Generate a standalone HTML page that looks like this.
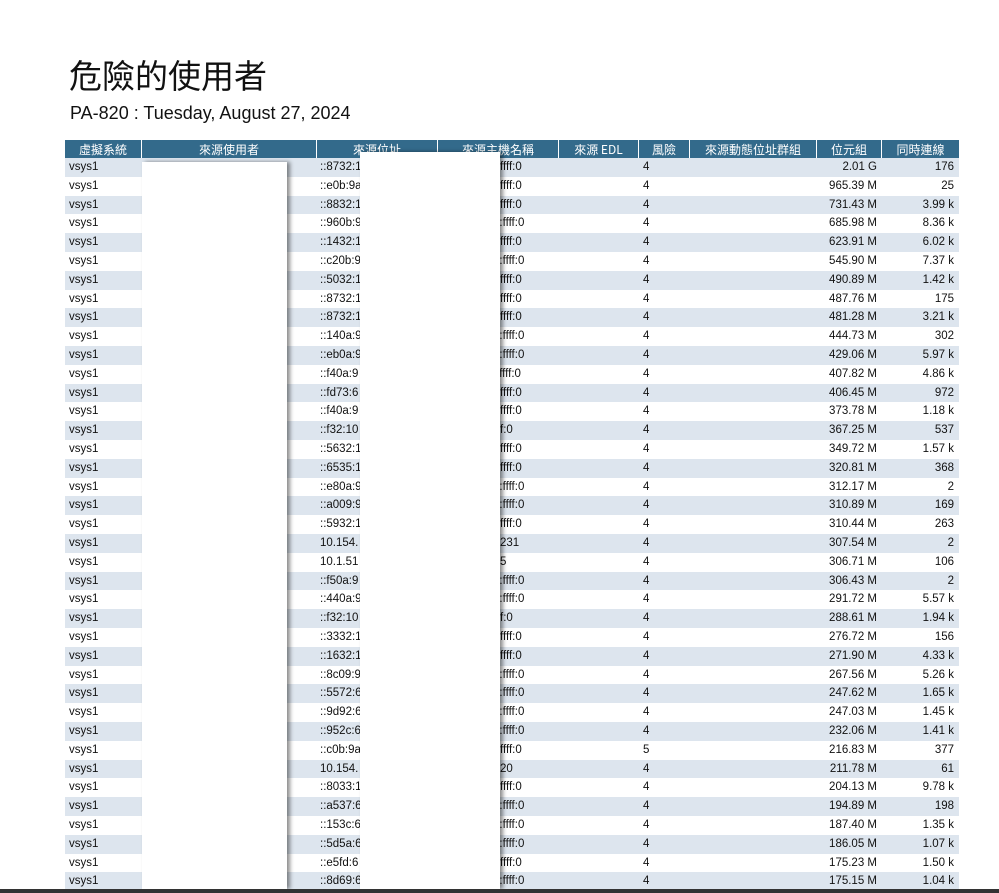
<!DOCTYPE html>
<html style="overflow:hidden;height:893px"><head><meta charset="utf-8"><style>
html,body{overflow:hidden}
body{margin:0;width:999px;height:893px;background:#fff;position:relative;font-family:"Liberation Sans","Noto Sans CJK TC",sans-serif;color:#111}
h1{position:absolute;left:69px;top:52px;margin:0;font-size:33px;font-weight:normal;font-family:"Noto Sans CJK TC",sans-serif;line-height:44px}
.sub{position:absolute;left:70px;top:101px;font-size:18px;line-height:24px}
.hd{position:absolute;top:140px;height:18px;background:#336a8b;color:#fff;font-size:12px;line-height:19px;text-align:center;font-family:"Noto Sans CJK TC",sans-serif}
.r{position:absolute;left:65px;width:894px;height:18.8px;font-size:11.5px;line-height:18.8px}
.r:nth-of-type(odd){background:#dde5ee}
.r span{position:absolute;white-space:nowrap}
.a{left:4px}.b{left:255px}.c{left:435px}.d{left:578px}.e{right:82px}.f{right:5px}
.box{position:absolute;background:#fff;box-shadow:3px 0 4px rgba(0,0,0,.45)}
.bot{position:absolute;left:0;top:889px;width:999px;height:4px;background:#333}
</style></head><body>
<h1>危險的使用者</h1>
<div class="sub">PA-820 : Tuesday, August 27, 2024</div>
<div class="hd" style="left:65px;width:76px">虛擬系統</div>
<div class="hd" style="left:142px;width:174px">來源使用者</div>
<div class="hd" style="left:317px;width:120px">來源位址</div>
<div class="hd" style="left:438px;width:120px">來源主機名稱</div>
<div class="hd" style="left:559px;width:79px">來源 EDL</div>
<div class="hd" style="left:639px;width:50px">風險</div>
<div class="hd" style="left:690px;width:126px">來源動態位址群組</div>
<div class="hd" style="left:817px;width:64px">位元組</div>
<div class="hd" style="left:882px;width:77px">同時連線</div>
<div id="rows">
<div class="r" style="top:158px"><span class="a">vsys1</span><span class="b">::8732:1</span><span class="c">ffff:0</span><span class="d">4</span><span class="e">2.01 G</span><span class="f">176</span></div>
<div class="r" style="top:176.8px"><span class="a">vsys1</span><span class="b">::e0b:9a</span><span class="c">ffff:0</span><span class="d">4</span><span class="e">965.39 M</span><span class="f">25</span></div>
<div class="r" style="top:195.6px"><span class="a">vsys1</span><span class="b">::8832:1</span><span class="c">ffff:0</span><span class="d">4</span><span class="e">731.43 M</span><span class="f">3.99 k</span></div>
<div class="r" style="top:214.4px"><span class="a">vsys1</span><span class="b">::960b:9</span><span class="c" style="left:428px">a:ffff:0</span><span class="d">4</span><span class="e">685.98 M</span><span class="f">8.36 k</span></div>
<div class="r" style="top:233.2px"><span class="a">vsys1</span><span class="b">::1432:1</span><span class="c">ffff:0</span><span class="d">4</span><span class="e">623.91 M</span><span class="f">6.02 k</span></div>
<div class="r" style="top:252px"><span class="a">vsys1</span><span class="b">::c20b:9</span><span class="c" style="left:428px">a:ffff:0</span><span class="d">4</span><span class="e">545.90 M</span><span class="f">7.37 k</span></div>
<div class="r" style="top:270.8px"><span class="a">vsys1</span><span class="b">::5032:1</span><span class="c">ffff:0</span><span class="d">4</span><span class="e">490.89 M</span><span class="f">1.42 k</span></div>
<div class="r" style="top:289.6px"><span class="a">vsys1</span><span class="b">::8732:1</span><span class="c">ffff:0</span><span class="d">4</span><span class="e">487.76 M</span><span class="f">175</span></div>
<div class="r" style="top:308.4px"><span class="a">vsys1</span><span class="b">::8732:1</span><span class="c">ffff:0</span><span class="d">4</span><span class="e">481.28 M</span><span class="f">3.21 k</span></div>
<div class="r" style="top:327.2px"><span class="a">vsys1</span><span class="b">::140a:9</span><span class="c" style="left:428px">a:ffff:0</span><span class="d">4</span><span class="e">444.73 M</span><span class="f">302</span></div>
<div class="r" style="top:346px"><span class="a">vsys1</span><span class="b">::eb0a:9</span><span class="c" style="left:428px">a:ffff:0</span><span class="d">4</span><span class="e">429.06 M</span><span class="f">5.97 k</span></div>
<div class="r" style="top:364.8px"><span class="a">vsys1</span><span class="b">::f40a:9</span><span class="c" style="left:431px">:ffff:0</span><span class="d">4</span><span class="e">407.82 M</span><span class="f">4.86 k</span></div>
<div class="r" style="top:383.6px"><span class="a">vsys1</span><span class="b">::fd73:6</span><span class="c">ffff:0</span><span class="d">4</span><span class="e">406.45 M</span><span class="f">972</span></div>
<div class="r" style="top:402.4px"><span class="a">vsys1</span><span class="b">::f40a:9</span><span class="c">ffff:0</span><span class="d">4</span><span class="e">373.78 M</span><span class="f">1.18 k</span></div>
<div class="r" style="top:421.2px"><span class="a">vsys1</span><span class="b">::f32:10</span><span class="c">f:0</span><span class="d">4</span><span class="e">367.25 M</span><span class="f">537</span></div>
<div class="r" style="top:440px"><span class="a">vsys1</span><span class="b">::5632:1</span><span class="c">ffff:0</span><span class="d">4</span><span class="e">349.72 M</span><span class="f">1.57 k</span></div>
<div class="r" style="top:458.8px"><span class="a">vsys1</span><span class="b">::6535:1</span><span class="c">ffff:0</span><span class="d">4</span><span class="e">320.81 M</span><span class="f">368</span></div>
<div class="r" style="top:477.6px"><span class="a">vsys1</span><span class="b">::e80a:9</span><span class="c" style="left:428px">a:ffff:0</span><span class="d">4</span><span class="e">312.17 M</span><span class="f">2</span></div>
<div class="r" style="top:496.4px"><span class="a">vsys1</span><span class="b">::a009:9</span><span class="c" style="left:428px">a:ffff:0</span><span class="d">4</span><span class="e">310.89 M</span><span class="f">169</span></div>
<div class="r" style="top:515.2px"><span class="a">vsys1</span><span class="b">::5932:1</span><span class="c">ffff:0</span><span class="d">4</span><span class="e">310.44 M</span><span class="f">263</span></div>
<div class="r" style="top:534px"><span class="a">vsys1</span><span class="b">10.154.</span><span class="c">231</span><span class="d">4</span><span class="e">307.54 M</span><span class="f">2</span></div>
<div class="r" style="top:552.8px"><span class="a">vsys1</span><span class="b">10.1.51</span><span class="c">5</span><span class="d">4</span><span class="e">306.71 M</span><span class="f">106</span></div>
<div class="r" style="top:571.6px"><span class="a">vsys1</span><span class="b">::f50a:9</span><span class="c" style="left:428px">a:ffff:0</span><span class="d">4</span><span class="e">306.43 M</span><span class="f">2</span></div>
<div class="r" style="top:590.4px"><span class="a">vsys1</span><span class="b">::440a:9</span><span class="c" style="left:428px">a:ffff:0</span><span class="d">4</span><span class="e">291.72 M</span><span class="f">5.57 k</span></div>
<div class="r" style="top:609.2px"><span class="a">vsys1</span><span class="b">::f32:10</span><span class="c">f:0</span><span class="d">4</span><span class="e">288.61 M</span><span class="f">1.94 k</span></div>
<div class="r" style="top:628px"><span class="a">vsys1</span><span class="b">::3332:1</span><span class="c">ffff:0</span><span class="d">4</span><span class="e">276.72 M</span><span class="f">156</span></div>
<div class="r" style="top:646.8px"><span class="a">vsys1</span><span class="b">::1632:1</span><span class="c">ffff:0</span><span class="d">4</span><span class="e">271.90 M</span><span class="f">4.33 k</span></div>
<div class="r" style="top:665.6px"><span class="a">vsys1</span><span class="b">::8c09:9</span><span class="c" style="left:428px">a:ffff:0</span><span class="d">4</span><span class="e">267.56 M</span><span class="f">5.26 k</span></div>
<div class="r" style="top:684.4px"><span class="a">vsys1</span><span class="b">::5572:6</span><span class="c" style="left:428px">3:ffff:0</span><span class="d">4</span><span class="e">247.62 M</span><span class="f">1.65 k</span></div>
<div class="r" style="top:703.2px"><span class="a">vsys1</span><span class="b">::9d92:6</span><span class="c" style="left:428px">3:ffff:0</span><span class="d">4</span><span class="e">247.03 M</span><span class="f">1.45 k</span></div>
<div class="r" style="top:722px"><span class="a">vsys1</span><span class="b">::952c:6</span><span class="c" style="left:428px">3:ffff:0</span><span class="d">4</span><span class="e">232.06 M</span><span class="f">1.41 k</span></div>
<div class="r" style="top:740.8px"><span class="a">vsys1</span><span class="b">::c0b:9a</span><span class="c">ffff:0</span><span class="d">5</span><span class="e">216.83 M</span><span class="f">377</span></div>
<div class="r" style="top:759.6px"><span class="a">vsys1</span><span class="b">10.154.</span><span class="c">20</span><span class="d">4</span><span class="e">211.78 M</span><span class="f">61</span></div>
<div class="r" style="top:778.4px"><span class="a">vsys1</span><span class="b">::8033:1</span><span class="c">ffff:0</span><span class="d">4</span><span class="e">204.13 M</span><span class="f">9.78 k</span></div>
<div class="r" style="top:797.2px"><span class="a">vsys1</span><span class="b">::a537:6</span><span class="c" style="left:428px">3:ffff:0</span><span class="d">4</span><span class="e">194.89 M</span><span class="f">198</span></div>
<div class="r" style="top:816px"><span class="a">vsys1</span><span class="b">::153c:6</span><span class="c" style="left:428px">a:ffff:0</span><span class="d">4</span><span class="e">187.40 M</span><span class="f">1.35 k</span></div>
<div class="r" style="top:834.8px"><span class="a">vsys1</span><span class="b">::5d5a:6</span><span class="c" style="left:428px">3:ffff:0</span><span class="d">4</span><span class="e">186.05 M</span><span class="f">1.07 k</span></div>
<div class="r" style="top:853.6px"><span class="a">vsys1</span><span class="b">::e5fd:6</span><span class="c">ffff:0</span><span class="d">4</span><span class="e">175.23 M</span><span class="f">1.50 k</span></div>
<div class="r" style="top:872.4px"><span class="a">vsys1</span><span class="b">::8d69:6</span><span class="c" style="left:428px">3:ffff:0</span><span class="d">4</span><span class="e">175.15 M</span><span class="f">1.04 k</span></div>
</div>
<div class="box" style="left:142px;top:162px;width:145px;height:727px"></div>
<div class="box" style="left:360px;top:152px;width:140px;height:737px"></div>
<div class="bot"></div>
</body></html>
